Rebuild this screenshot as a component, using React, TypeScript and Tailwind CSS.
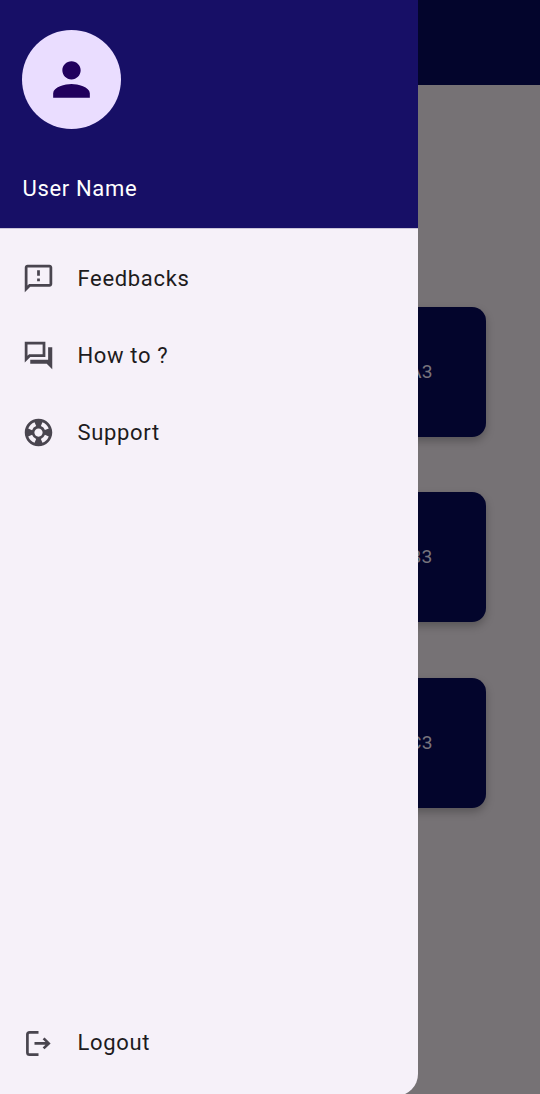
import type { ReactNode } from "react";
import { MdPerson, MdOutlineFeedback, MdOutlineSupport } from "react-icons/md";

function ForumIcon() {
  return (
    <svg viewBox="0 0 24 24" className="size-[33px]" fill="currentColor">
      <path d="M15 4v7H5.17L4 12.17V4h11m2-2H2v15l4-4h11V2zm5 4h-3v9H6v3h12l4 4V6z" />
    </svg>
  );
}

function LogoutIcon() {
  return (
    <svg viewBox="0 0 33 33" className="size-[33px]" fill="none" stroke="currentColor" strokeWidth="2.7">
      <path d="M16.5 6.3H7.6q-2.2 0-2.2 2.2v18q0 2.2 2.2 2.2h8.9" />
      <path d="M12.5 17.4h14.4M21.6 12.4l5.1 5-5.1 5" />
    </svg>
  );
}

const icon = "size-[33px]";
const items = [
  { label: "Feedbacks", icon: <MdOutlineFeedback className={icon} /> },
  { label: "How to ?", icon: <ForumIcon /> },
  { label: "Support", icon: <MdOutlineSupport className={icon} /> },
];

function Row({ label, icon }: { label: string; icon: ReactNode }) {
  return (
    <button className="flex h-[77px] w-full items-center gap-[22.5px] pl-[22px] text-left text-[#49454f]">
      {icon}
      <span className="text-[22px] leading-[33px] tracking-[0.66px] text-[#1d1b20]">{label}</span>
    </button>
  );
}

export default function App() {
  return (
    <div className="relative h-[1094px] w-[540px] overflow-hidden bg-[#767275] font-['Roboto',sans-serif]">
      <header className="h-[85px] bg-[#03052c]" />
      <main className="flex flex-col items-end gap-[55.4px] pt-[222px] pr-[54px]">
        {["A3", "B3", "C3"].map((t) => (
          <div
            key={t}
            className="flex h-[130px] w-[130px] items-center justify-center rounded-[14px] bg-[#03052c] pt-px text-[19.25px] tracking-[0.35px] text-[#77747c] shadow-[0_4px_8px_rgba(0,0,0,0.25)]"
          >
            {t}
          </div>
        ))}
      </main>
      <aside className="absolute top-0 left-0 flex h-[1096px] w-[418px] flex-col overflow-hidden rounded-br-[22px] bg-[#f6f1f9]">
        <div className="flex h-[229px] flex-col border-b border-[#cac4d8] bg-[#170f66] pt-[30px] pl-[22px]">
          <div className="flex size-[99px] items-center justify-center rounded-full bg-[#eaddff] text-[#21005d]">
            <MdPerson className="size-[55px]" />
          </div>
          <span className="mt-[43px] pl-[0.5px] text-[22px] leading-[33px] tracking-[0.66px] text-white">User Name</span>
        </div>
        <nav className="pt-[11px]">
          {items.map((i) => (
            <Row key={i.label} {...i} />
          ))}
        </nav>
        <div className="mt-auto pb-[15px]">
          <Row label="Logout" icon={<LogoutIcon />} />
        </div>
      </aside>
    </div>
  );
}
